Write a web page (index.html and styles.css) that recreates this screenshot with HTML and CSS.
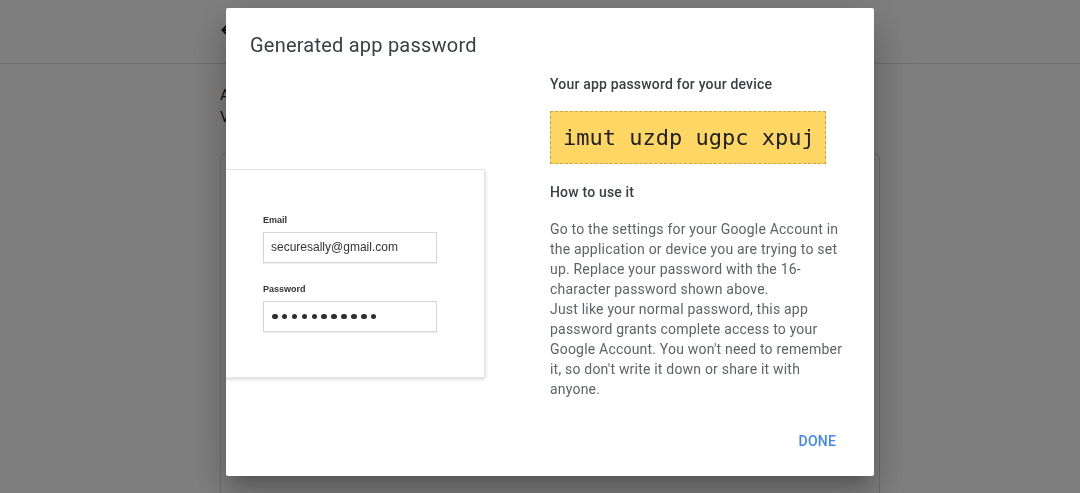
FILE: index.html
```html
<!DOCTYPE html>
<html lang="en">
<head>
<meta charset="utf-8">
<title>Generated app password</title>
<link rel="stylesheet" href="styles.css">
</head>
<body>
<div class="page">
  <header class="topbar">
    <svg class="back" width="24" height="24" viewBox="0 0 24 24"><path d="M20 11H7.83l5.59-5.59L12 4l-8 8 8 8 1.41-1.41L7.83 13H20v-2z" fill="#202124"/></svg>
  </header>
  <main class="content">
    <p class="intro">App passwords let you sign in to your<br>Verification. You'll only need to</p>
    <section class="bg-card"></section>
  </main>
</div>

<div class="overlay">
  <div class="dialog" role="dialog" aria-labelledby="dlg-title">
    <h2 class="dialog-title" id="dlg-title">Generated app password</h2>
    <div class="dialog-body">
      <div class="illustration">
        <div class="login-card">
          <div class="field-label">Email</div>
          <div class="field-input">securesally@gmail.com</div>
          <div class="field-label field-label-2">Password</div>
          <div class="field-input dots">
            <span></span><span></span><span></span><span></span><span></span><span></span><span></span><span></span><span></span><span></span><span></span>
          </div>
        </div>
      </div>
      <div class="info">
        <h3 class="info-heading">Your app password for your device</h3>
        <div class="app-password">imut uzdp ugpc xpuj</div>
        <h3 class="info-heading how">How to use it</h3>
        <p class="info-text">Go to the settings for your Google Account in the application or device you are trying to set up. Replace your password with the 16-character password shown above.<br>Just like your normal password, this app password grants complete access to your Google Account. You won't need to remember it, so don't write it down or share it with anyone.</p>
      </div>
    </div>
    <div class="dialog-actions">
      <button class="btn-done" type="button">DONE</button>
    </div>
  </div>
</div>
</body>
</html>
```

FILE: styles.css
```css
html, body {
  margin: 0;
  padding: 0;
  height: 100%;
  overflow: hidden;
}
body {
  background: #ffffff;
  font-family: Roboto, "Noto Sans", Arial, sans-serif;
  color: #202124;
}

/* background page */
.page {
  display: flex;
  flex-direction: column;
}
.topbar {
  height: 63px;
  border-bottom: 1px solid #e2e2e2;
  display: flex;
  align-items: center;
  padding-left: 217px;
}
.topbar .back {
  margin-top: -4px;
}
.content {
  margin-left: 220px;
  width: 660px;
  padding-top: 20px;
}
.intro {
  margin: 0;
  font-size: 15px;
  line-height: 22px;
  color: #202124;
  white-space: nowrap;
}
.bg-card {
  margin-top: 24px;
  height: 341px;
  border: 1px solid #dadce0;
  border-bottom: none;
  border-radius: 8px 8px 0 0;
}

/* overlay + dialog */
.overlay {
  position: fixed;
  inset: 0;
  background: rgba(0, 0, 0, 0.5);
  display: flex;
  align-items: flex-start;
  padding: 8px 0 0 226px;
}
.dialog {
  width: 648px;
  height: 468px;
  background: #ffffff;
  border-radius: 2px;
  box-shadow: 0 11px 15px -7px rgba(0,0,0,.2), 0 24px 38px 3px rgba(0,0,0,.14), 0 9px 46px 8px rgba(0,0,0,.12);
  display: flex;
  flex-direction: column;
  overflow: hidden;
}
.dialog-title {
  margin: 0;
  padding: 23px 24px 0;
  font-size: 20px;
  line-height: 28px;
  font-weight: 400;
  letter-spacing: 0.22px;
  color: #3c4043;
}
.dialog-body {
  display: flex;
  margin-top: 15px;
  flex: 1;
}
.illustration {
  width: 324px;
  flex: none;
}
.login-card {
  margin-top: 96px;
  margin-left: -8px;
  width: 221px;
  padding: 44px 0 45px 45px;
  background: #ffffff;
  box-shadow: 0 0 0 1px #e4e4e4, 1px 2px 4px rgba(0,0,0,.18);
  font-family: "Liberation Sans", Arial, sans-serif;
  color: #333333;
}
.field-label {
  font-size: 9px;
  line-height: 12px;
  font-weight: 700;
  color: #333;
}
.field-label-2 {
  margin-top: 20px;
}
.field-input {
  margin-top: 6px;
  width: 158px;
  height: 29px;
  padding: 0 7px;
  border: 1px solid #d6d6d6;
  box-shadow: 0 1px 1px rgba(0,0,0,.06);
  font-size: 12px;
  line-height: 29px;
  color: #333;
}
.dots {
  display: flex;
  align-items: center;
  gap: 4.4px;
  padding-left: 8px;
  width: 157px;
}
.dots span {
  width: 5.5px;
  height: 5.5px;
  border-radius: 50%;
  background: #2e2e2e;
}
.info {
  width: 300px;
  flex: none;
}
.info-heading {
  margin: 0;
  font-size: 14px;
  line-height: 20px;
  font-weight: 500;
  letter-spacing: 0.18px;
  color: #3c4043;
}
.app-password {
  margin-top: 17px;
  display: inline-block;
  height: 51px;
  padding: 0 10px 0 12px;
  border: 1px dashed #c7a850;
  background: #fdd663;
  font-family: "DejaVu Sans Mono", "Liberation Mono", monospace;
  font-size: 22px;
  line-height: 51px;
  color: #202124;
}
.how {
  margin-top: 18px;
}
.info-text {
  margin: 17px 0 0;
  font-size: 14px;
  line-height: 20px;
  letter-spacing: 0.2px;
  color: #5f6368;
}
.dialog-actions {
  display: flex;
  justify-content: flex-end;
  padding: 0 30px 17px;
}
.btn-done {
  height: 36px;
  padding: 0 8px;
  border: none;
  background: transparent;
  font-family: Roboto, Arial, sans-serif;
  font-size: 14px;
  font-weight: 500;
  letter-spacing: 0.2px;
  color: #4285f4;
  cursor: pointer;
}
```
